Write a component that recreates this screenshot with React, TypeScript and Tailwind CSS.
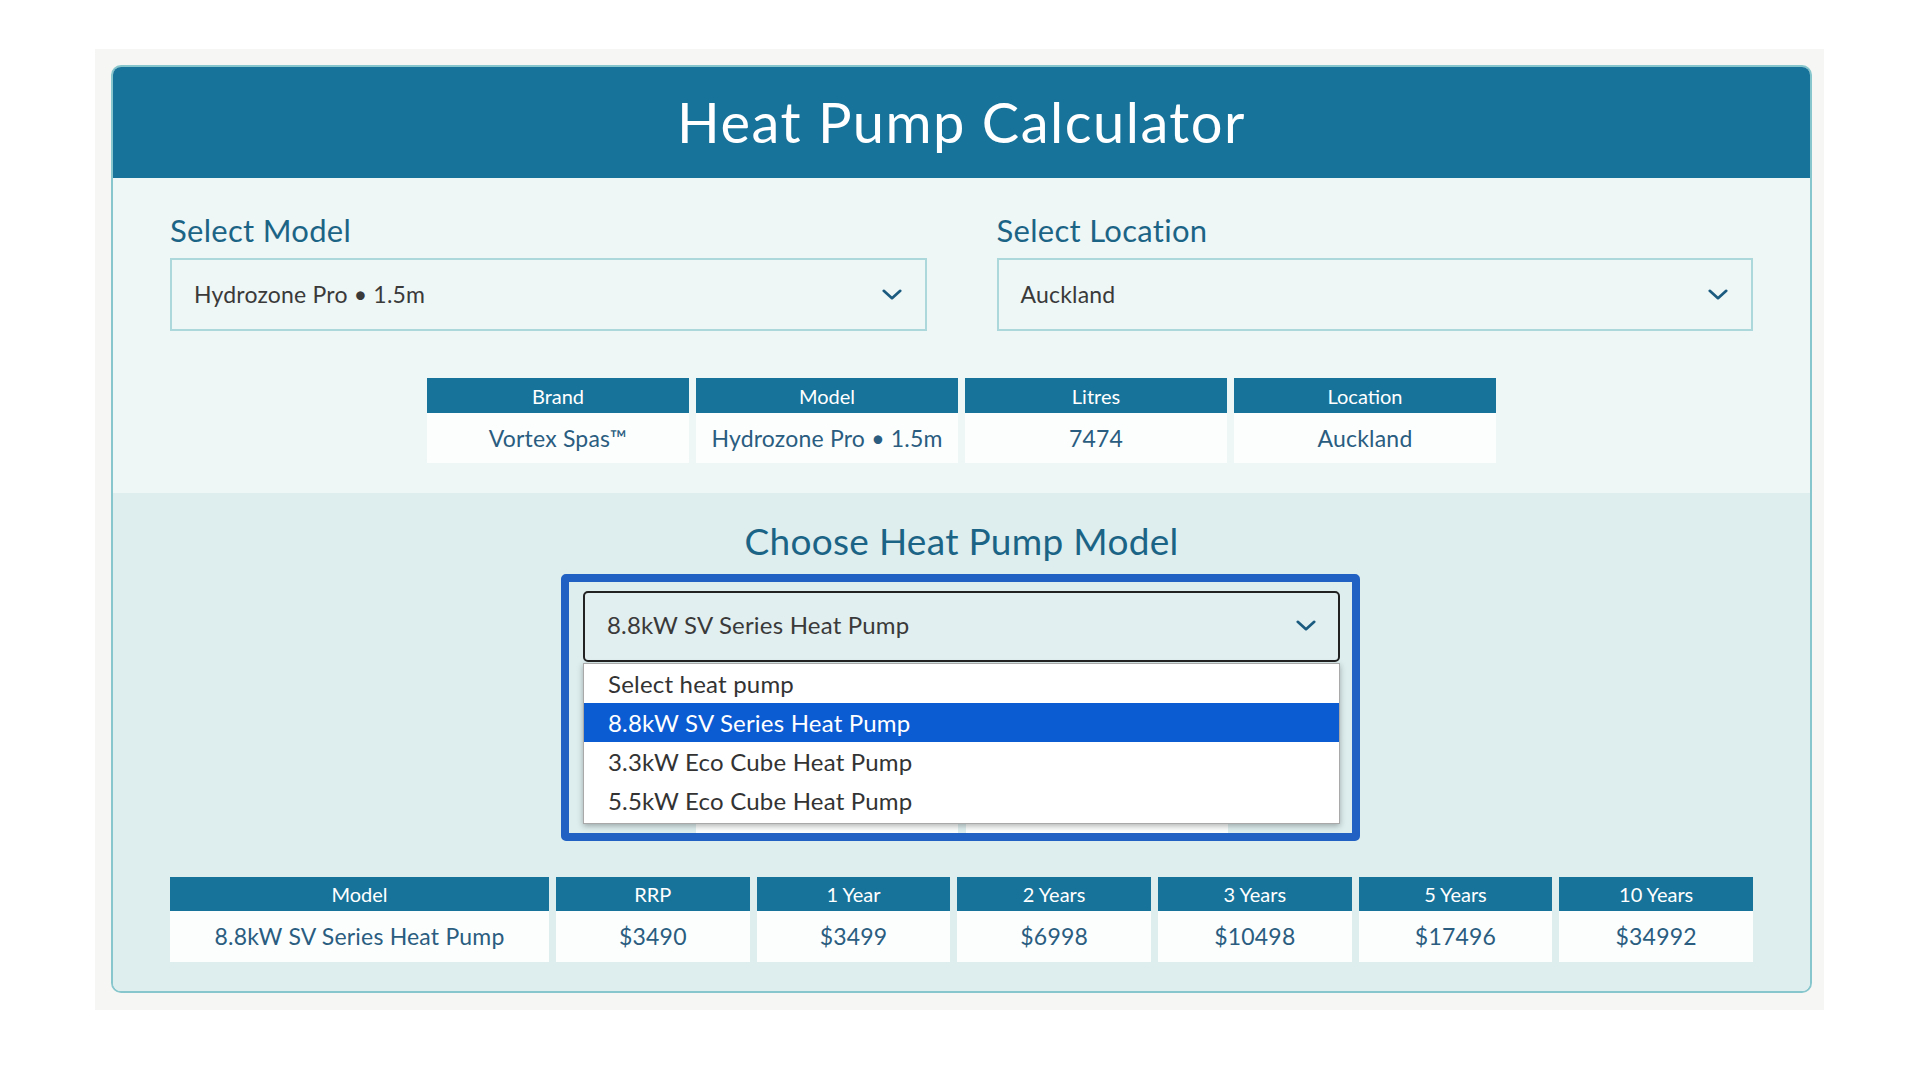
import React from "react";

// Heat pump running-cost calculator (static snapshot with dropdown open)

const infoCols = [
  { head: "Brand", value: "Vortex Spas™" },
  { head: "Model", value: "Hydrozone Pro • 1.5m" },
  { head: "Litres", value: "7474" },
  { head: "Location", value: "Auckland" },
];

const costCols = [
  { head: "Model", value: "8.8kW SV Series Heat Pump" },
  { head: "RRP", value: "$3490" },
  { head: "1 Year", value: "$3499" },
  { head: "2 Years", value: "$6998" },
  { head: "3 Years", value: "$10498" },
  { head: "5 Years", value: "$17496" },
  { head: "10 Years", value: "$34992" },
];

const pumpOptions = [
  "Select heat pump",
  "8.8kW SV Series Heat Pump",
  "3.3kW Eco Cube Heat Pump",
  "5.5kW Eco Cube Heat Pump",
];

const Chevron: React.FC<{ className?: string }> = ({ className }) => (
  <svg viewBox="0 0 24 14" className={className} fill="none">
    <path
      d="M3 3l9 8 9-8"
      stroke="currentColor"
      strokeWidth="3"
      strokeLinecap="round"
      strokeLinejoin="round"
    />
  </svg>
);

const FakeSelect: React.FC<{ value: string }> = ({ value }) => (
  <div className="h-[73px] border-2 border-[#acd8dc] bg-[#eef6f6] flex items-center justify-between pl-[22px] pr-[22px]">
    <span className="text-[23px] tracking-[0.2px] text-[#3a3a3a]">{value}</span>
    <Chevron className="w-[22px] h-[13px] text-[#1b5b80]" />
  </div>
);

export default function App() {
  return (
    <div className="min-h-screen bg-white pt-[49px] pl-[95px] font-[Lato,sans-serif]">
      <div className="w-[1729px] h-[961px] bg-[#f6f6f4] pl-[16px] pt-[16px]">
        <div className="w-[1701px] h-[928px] border-2 border-[#86c6cc] rounded-[10px] overflow-hidden flex flex-col">
          {/* Header */}
          <div className="h-[111px] bg-[#17739a] flex items-center justify-center">
            <h1 className="text-[56px] tracking-[1.5px] text-white leading-none pb-[2px]">
              Heat Pump Calculator
            </h1>
          </div>

          {/* Spa selection */}
          <div className="bg-[#eef6f6] h-[315px] px-[57px] pt-[34px]">
            <div className="grid grid-cols-2 gap-[70px]">
              <div>
                <div className="text-[31px] leading-[36px] tracking-[0.3px] text-[#1c6486] mb-[10px]">
                  Select Model
                </div>
                <FakeSelect value="Hydrozone Pro • 1.5m" />
              </div>
              <div>
                <div className="text-[31px] leading-[36px] tracking-[0.3px] text-[#1c6486] mb-[10px]">
                  Select Location
                </div>
                <FakeSelect value="Auckland" />
              </div>
            </div>

            <div className="mt-[47px] mx-auto w-[1069px] grid grid-cols-4 gap-x-[7px]">
              {infoCols.map((c) => (
                <div key={c.head} className="flex flex-col">
                  <div className="h-[35px] bg-[#17739a] text-white text-[20px] flex items-center justify-center">
                    {c.head}
                  </div>
                  <div className="h-[50px] bg-[#fcfefe] text-[#2a5d80] text-[23px] tracking-[0.2px] flex items-center justify-center">
                    {c.value}
                  </div>
                </div>
              ))}
            </div>
          </div>

          {/* Heat pump selection */}
          <div className="flex-1 bg-[#deeeef] px-[57px] pt-[27px]">
            <h2 className="text-center text-[37px] leading-[42px] tracking-[0.3px] text-[#1c6486]">
              Choose Heat Pump Model
            </h2>

            <div className="relative mx-auto w-[757px] mt-[29px]">
              {/* focus highlight */}
              <div className="absolute -left-[22px] -right-[20px] -top-[17px] h-[267px] border-[8px] border-[#2061c3] rounded-[5px] z-10 pointer-events-none" />

              <div className="h-[71px] border-2 border-[#222] rounded-[5px] bg-[#e2eff0] flex items-center justify-between pl-[22px] pr-[21px] pb-[3px]">
                <span className="text-[24px] tracking-[0.2px] text-[#3a3a3a]">
                  8.8kW SV Series Heat Pump
                </span>
                <Chevron className="w-[22px] h-[13px] text-[#1b5b80]" />
              </div>

              {/* open dropdown */}
              <div className="absolute left-0 right-0 top-[72px] bg-white border border-[#a9a9a9] shadow-[0_2px_6px_rgba(0,0,0,0.3)] z-20 pb-[3px]">
                {pumpOptions.map((o, i) => (
                  <div
                    key={o}
                    className={
                      i === 1
                        ? "h-[39px] pl-[24px] flex items-center text-[24px] tracking-[0.2px] bg-[#0b5bd3] text-white"
                        : "h-[39px] pl-[24px] flex items-center text-[24px] tracking-[0.2px] text-[#333]"
                    }
                  >
                    {o}
                  </div>
                ))}
              </div>
            </div>

            {/* table hidden under the dropdown */}
            <div className="mt-[91px] mx-auto w-[532px] grid grid-cols-2 gap-x-[8px]">
              {[0, 1].map((k) => (
                <div key={k} className="flex flex-col">
                  <div className="h-[35px] bg-[#17739a]" />
                  <div className="h-[49px] bg-[#fcfefe]" />
                </div>
              ))}
            </div>

            <div className="mt-[40px] grid grid-cols-[379px_repeat(6,1fr)] gap-x-[7px]">
              {costCols.map((c) => (
                <div key={c.head} className="flex flex-col">
                  <div className="h-[34px] bg-[#17739a] text-white text-[20px] flex items-center justify-center">
                    {c.head}
                  </div>
                  <div className="h-[51px] bg-[#fcfefe] text-[#2a5d80] text-[23px] tracking-[0.2px] flex items-center justify-center">
                    {c.value}
                  </div>
                </div>
              ))}
            </div>
          </div>
        </div>
      </div>
    </div>
  );
}
